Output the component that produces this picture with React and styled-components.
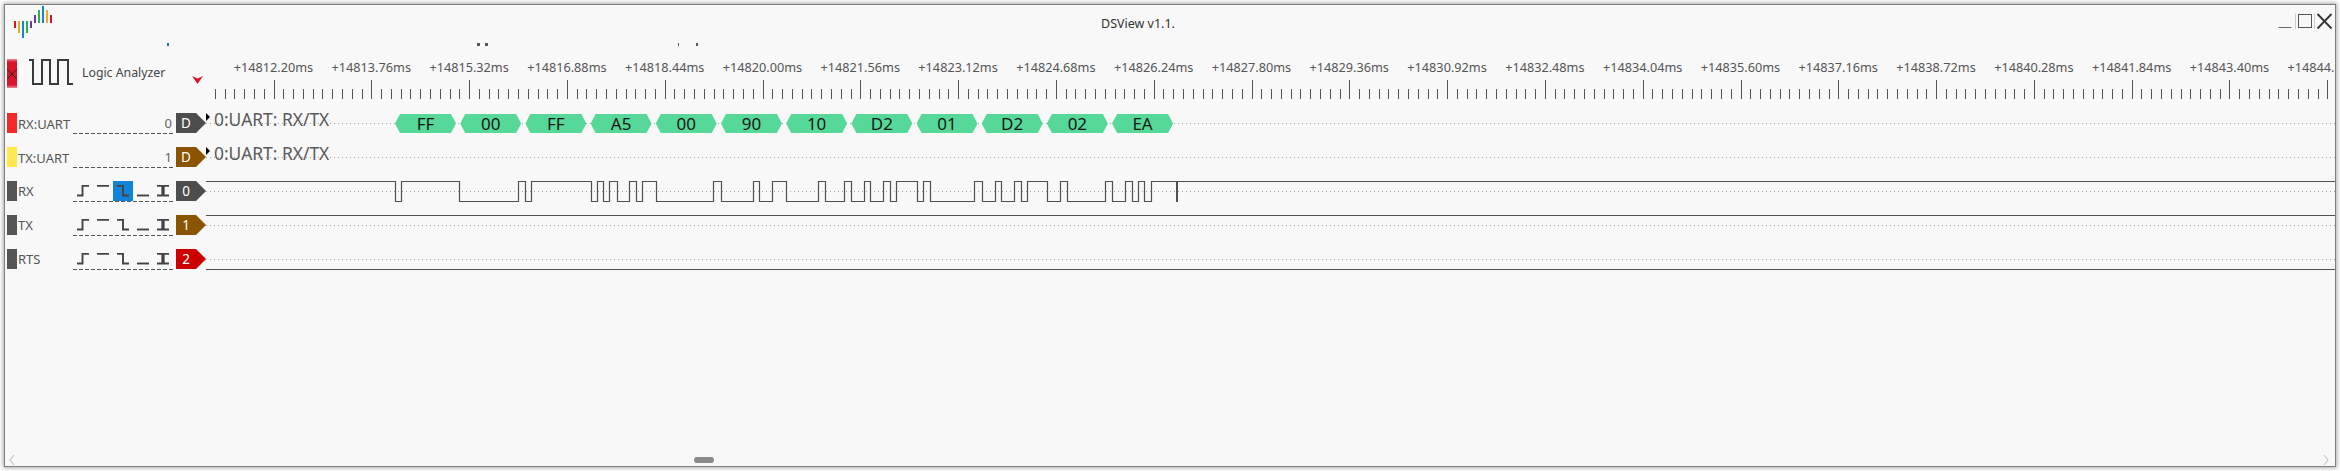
import React from "react";
import styled, { createGlobalStyle } from "styled-components";

const Global = createGlobalStyle`
  html, body { margin: 0; padding: 0; background: #ffffff; }
  body { width: 2340px; height: 471px; overflow: hidden; font-family: "Noto Sans", "Liberation Sans", sans-serif; }
`;

const Window = styled.div`
  box-sizing: border-box;
  position: relative;
  width: 2332px;
  height: 463px;
  margin: 4px 0 0 4px;
  border: 1px solid #7f7f7f;
  box-shadow: 0 0 4px 1px #a8a8a8;
  background: #f8f8f8;
  display: flex;
  flex-direction: column;
  overflow: hidden;
  color: #555;
`;

const TitleBar = styled.div`
  position: relative;
  height: 42px;
  flex: none;
  display: flex;
  align-items: flex-start;
`;

const LogoSvg = styled.svg`
  display: block;
  width: 50px;
  height: 36px;
  flex: none;
`;

const Title = styled.div`
  margin: 11px 0 0 1046px;
  font-size: 12.5px;
  line-height: 16px;
  color: #333;
`;

const Controls = styled.div`
  margin: 8px 2px 0 auto;
  display: flex;
  align-items: flex-start;
`;

const ControlSvg = styled.svg`
  display: block;
  width: 55px;
  height: 18px;
`;

const ClipMark = styled.i`
  position: absolute;
  top: 38px;
  left: ${(p) => p.$x - 5}px;
  width: ${(p) => p.$w}px;
  height: 3px;
  background: ${(p) => p.$c || "#556"};
`;

const RulerBar = styled.div`
  height: 66px;
  flex: none;
  display: flex;
`;

const ModePanel = styled.div`
  width: 201px;
  flex: none;
  box-sizing: border-box;
  padding: 12px 0 0 2px;
  display: flex;
  align-items: flex-start;
`;

const ModeClose = styled.div`
  width: 10px;
  height: 29px;
  flex: none;
  background: linear-gradient(180deg, #ef8e9a 0, #d9152b 3px, #d9152b 26px, #ef8e9a 100%);
  display: flex;
  align-items: center;
  justify-content: center;
`;

const ModeIcon = styled.svg`
  display: block;
  width: 46px;
  height: 28px;
  margin-left: 11px;
  flex: none;
`;

const ModeLabel = styled.div`
  margin: 5px 0 0 8px;
  font-size: 12.3px;
  line-height: 17px;
  color: #444;
  white-space: nowrap;
  width: 83px;
  flex: none;
`;

const ModeCaret = styled.div`
  margin: 17px 0 0 27px;
  width: 11px;
  height: 8px;
  flex: none;
  background: #d9152b;
  clip-path: polygon(0 0, 50% 30%, 100% 0, 50% 100%);
`;

const RulerArea = styled.div`
  flex: 1;
  min-width: 0;
  overflow: hidden;
`;

const RulerLabels = styled.div`
  display: flex;
  padding-left: 18.6px;
  margin-top: 12px;
  height: 16px;
`;

const RulerLabel = styled.div`
  flex: 0 0 97.8px;
  text-align: center;
  font-size: 12.7px;
  line-height: 16px;
  white-space: nowrap;
  color: #555;
`;

const Ticks = styled.svg`
  display: block;
  margin-top: 5px;
  width: 2129px;
  height: 20px;
`;

const Row = styled.div`
  height: 34px;
  flex: none;
  display: flex;
  align-items: flex-start;
  padding-left: 2px;
`;

const Swatch = styled.div`
  width: 10px;
  height: 20px;
  flex: none;
  background: ${(p) => p.$color};
`;

const Name = styled.div`
  width: 55px;
  flex: none;
  padding-left: 1px;
  font-size: 13px;
  line-height: 20px;
  color: #555;
  position: relative;
  top: ${(p) => (p.$decoder ? 1 : 0)}px;
`;

const TriggerCell = styled.div`
  width: 100px;
  height: 21px;
  flex: none;
  display: flex;
  justify-content: flex-end;
  background: repeating-linear-gradient(90deg, #555 0 4px, transparent 4px 6px) bottom / 100% 1px no-repeat;
`;

const Index = styled.span`
  font-size: 13px;
  line-height: 21px;
  padding-right: 1px;
  color: #666;
`;

const TriggerOption = styled.div`
  width: 20px;
  height: 20px;
  display: flex;
  align-items: center;
  justify-content: center;
  background: ${(p) => (p.$active ? "#1184d8" : "transparent")};
`;

const TriggerSvg = styled.svg`
  display: block;
  width: 12px;
  height: 12px;
  fill: none;
  stroke: #444;
  stroke-width: 1.9;
`;

const Tag = styled.div`
  width: 30px;
  height: 20px;
  flex: none;
  margin-left: 3px;
  background: ${(p) => p.$color};
  clip-path: polygon(0 0, 20px 0, 30px 50%, 20px 100%, 0 100%);
  color: #fff;
  font-size: 13.5px;
  line-height: 20px;
  box-sizing: border-box;
  padding-right: 10px;
  text-align: center;
`;

const Trace = styled.div`
  position: relative;
  flex: 1;
  height: 34px;
  min-width: 0;
  &::before {
    content: "";
    position: absolute;
    left: 0;
    right: 0;
    top: 10px;
    height: 1px;
    background: repeating-linear-gradient(90deg, #a4a4a4 0 1px, transparent 1px 4px);
  }
`;

const Wave = styled.svg`
  position: absolute;
  left: 0;
  top: 0;
  width: 2129px;
  height: 22px;
  fill: none;
  stroke: #505050;
  stroke-width: 1.2;
`;

const DecoderName = styled.div`
  position: absolute;
  left: 8px;
  top: -5px;
  font-size: 17.4px;
  line-height: 22px;
  color: #5a5a5a;
  white-space: nowrap;
`;

const Marker = styled.div`
  position: absolute;
  left: 0;
  top: 0;
  width: 4px;
  height: 8px;
  background: #000;
  clip-path: polygon(0 0, 100% 50%, 0 100%);
`;

const DecodedRun = styled.div`
  position: relative;
  display: flex;
  gap: 4.2px;
  padding: 1px 0 0 189px;
`;

const Cell = styled.div`
  width: 61px;
  height: 19px;
  flex: none;
  background: #55d898;
  clip-path: polygon(5px 0, 56px 0, 61px 50%, 56px 100%, 5px 100%, 0 50%);
  text-align: center;
  font-size: 17px;
  line-height: 19px;
  color: #151515;
`;

const Scrollbar = styled.div`
  margin-top: auto;
  height: 12px;
  flex: none;
  display: flex;
  align-items: center;
  padding: 0 6px 0 4px;
`;

const Chevron = styled.svg`
  display: block;
  width: 6px;
  height: 12px;
  flex: none;
  fill: none;
  stroke: #c4c4c4;
  stroke-width: 1.1;
  margin-left: ${(p) => (p.$end ? "auto" : "0")};
`;

const Pill = styled.div`
  width: 20px;
  height: 6px;
  flex: none;
  margin-left: 679px;
  background: #8a8a8a;
  border-radius: 3px;
`;

const logoBars = [
  [14, 21, 28, "#d9152b"], [18, 21, 33, "#f5a81c"], [22, 21, 38, "#1484d8"], [26, 21, 33, "#2eb152"], [30, 21, 28, "#6a3aa0"],
  [34, 15, 23, "#6a3aa0"], [38, 10, 23, "#2eb152"], [42, 6, 23, "#1484d8"], [46, 10, 23, "#f5a81c"], [50, 15, 23, "#d9152b"],
];

const Logo = () => (
  <LogoSvg viewBox="5 5 50 36">
    {logoBars.map(([x, y1, y2, c]) => (
      <rect key={x} x={x} y={y1} width="2" height={y2 - y1} fill={c} />
    ))}
  </LogoSvg>
);

const WindowControls = () => (
  <Controls>
    <ControlSvg viewBox="0 0 55 18" fill="none">
      <path d="M0.5 14.5H13.5" stroke="#666" strokeWidth="1" />
      <path d="M17.5 0.5V16" stroke="#ccc" strokeWidth="1" />
      <rect x="20.5" y="1.5" width="13" height="13" stroke="#555" strokeWidth="1" />
      <path d="M36.5 0.5V16" stroke="#ccc" strokeWidth="1" />
      <path d="M39.5 1L53.5 15.5M53.5 1L39.5 15.5" stroke="#333" strokeWidth="1.8" />
    </ControlSvg>
  </Controls>
);

const PERIOD = 97.8;
const rulerLabels = Array.from({ length: 22 }, (_, k) => `+${(14812.2 + 1.56 * k).toFixed(2)}ms`);

const RulerTicks = () => {
  const ticks = [];
  for (let k = -6; k <= 212; k++) {
    const x = Math.round(273.5 - 206 + (PERIOD / 10) * k) + 0.5;
    ticks.push(<path key={k} d={`M${x} ${k % 10 === 0 ? 0 : 9}V19`} />);
  }
  return (
    <Ticks viewBox="0 0 2129 20" fill="none" stroke="#555" strokeWidth="1" shapeRendering="crispEdges">
      {ticks}
    </Ticks>
  );
};

const edges = [
  394.7, 400.7, 459.3, 518.3, 524.7, 531.3, 590.7, 596.7, 603.3, 609.3, 616.7, 629.3, 636, 642.3, 655.7, 713.3, 720.7, 753.3, 759.3, 772.3,
  785.7, 818.3, 824.7, 844.3, 850.7, 863.7, 870.3, 883.3, 890, 896.3, 916.7, 922.7, 929.7, 974.3, 981.7, 994.7, 1000.7, 1013.7, 1020.7,
  1026.7, 1046.7, 1059.7, 1066.7, 1105.3, 1111.7, 1124.7, 1131.7, 1137.7, 1144.3, 1150.7,
];

const rxPath = () => {
  let level = 0.5;
  let d = "M0 0.5";
  edges.forEach((e) => {
    const x = Math.round(e - 206) + 0.5;
    level = level === 0.5 ? 20.5 : 0.5;
    d += `H${x}V${level}`;
  });
  return d + "H2129";
};

const RxWave = () => (
  <Wave viewBox="0 0 2129 22">
    <path d={rxPath()} />
    <path d="M971 0V21" strokeWidth="2" />
  </Wave>
);

const FlatWave = ({ y }) => (
  <Wave viewBox="0 0 2129 22">
    <path d={`M0 ${y}H2129`} />
  </Wave>
);

const triggerPaths = [
  "M0 10.5H5.5V0.8H12",
  "M0 0.8H12",
  "M0 0.8H6V10.5H12",
  "M0 10.5H12",
  "M0 0.8H12M0 10.5H12M5.3 0.8V10.5M6.7 0.8V10.5",
];

const TriggerGroup = ({ active }) => (
  <TriggerCell>
    {triggerPaths.map((d, i) => (
      <TriggerOption key={i} $active={active === i}>
        <TriggerSvg viewBox="0 0 12 12">
          <path d={d} />
        </TriggerSvg>
      </TriggerOption>
    ))}
  </TriggerCell>
);

const decoded = ["FF", "00", "FF", "A5", "00", "90", "10", "D2", "01", "D2", "02", "EA"];

export default function App() {
  return (
    <>
      <Global />
      <Window>
        <TitleBar>
          <Logo />
          <Title>DSView v1.1.</Title>
          <WindowControls />
          <ClipMark $x={167} $w={2} $c="#2a6f9f" />
          <ClipMark $x={477} $w={3} />
          <ClipMark $x={485} $w={3} />
          <ClipMark $x={678} $w={1} />
          <ClipMark $x={696} $w={2} />
        </TitleBar>
        <RulerBar>
          <ModePanel>
            <ModeClose>
              <svg width="10" height="12" viewBox="0 0 10 12" fill="none" stroke="#3a2226" strokeWidth="1">
                <path d="M0 1L10 11M10 1L0 11" />
              </svg>
            </ModeClose>
            <ModeIcon viewBox="0 0 46 28" fill="none" stroke="#3a3a3a" strokeWidth="2">
              <path d="M1 1H5V25H14V1H22V25H30V1H40V25H45" />
            </ModeIcon>
            <ModeLabel>Logic Analyzer</ModeLabel>
            <ModeCaret />
          </ModePanel>
          <RulerArea>
            <RulerLabels>
              {rulerLabels.map((l) => (
                <RulerLabel key={l}>{l}</RulerLabel>
              ))}
            </RulerLabels>
            <RulerTicks />
          </RulerArea>
        </RulerBar>

        <Row>
          <Swatch $color="#f42a2a" />
          <Name $decoder>RX:UART</Name>
          <TriggerCell>
            <Index>0</Index>
          </TriggerCell>
          <Tag $color="#4d4d4d">D</Tag>
          <Trace>
            <Marker />
            <DecoderName>0:UART: RX/TX</DecoderName>
            <DecodedRun>
              {decoded.map((v, i) => (
                <Cell key={i}>{v}</Cell>
              ))}
            </DecodedRun>
          </Trace>
        </Row>

        <Row>
          <Swatch $color="#ffe84d" />
          <Name $decoder>TX:UART</Name>
          <TriggerCell>
            <Index>1</Index>
          </TriggerCell>
          <Tag $color="#8b5400">D</Tag>
          <Trace>
            <Marker />
            <DecoderName>0:UART: RX/TX</DecoderName>
          </Trace>
        </Row>

        <Row>
          <Swatch $color="#555555" />
          <Name>RX</Name>
          <TriggerGroup active={2} />
          <Tag $color="#4d4d4d">0</Tag>
          <Trace>
            <RxWave />
          </Trace>
        </Row>

        <Row>
          <Swatch $color="#555555" />
          <Name>TX</Name>
          <TriggerGroup />
          <Tag $color="#8b5400">1</Tag>
          <Trace>
            <FlatWave y={0.5} />
          </Trace>
        </Row>

        <Row>
          <Swatch $color="#555555" />
          <Name>RTS</Name>
          <TriggerGroup />
          <Tag $color="#cc0000">2</Tag>
          <Trace>
            <FlatWave y={20.5} />
          </Trace>
        </Row>

        <Scrollbar>
          <Chevron viewBox="0 0 6 12">
            <path d="M5 1L1 6L5 11" />
          </Chevron>
          <Pill />
          <Chevron viewBox="0 0 6 12" $end>
            <path d="M1 1L5 6L1 11" />
          </Chevron>
        </Scrollbar>
      </Window>
    </>
  );
}
